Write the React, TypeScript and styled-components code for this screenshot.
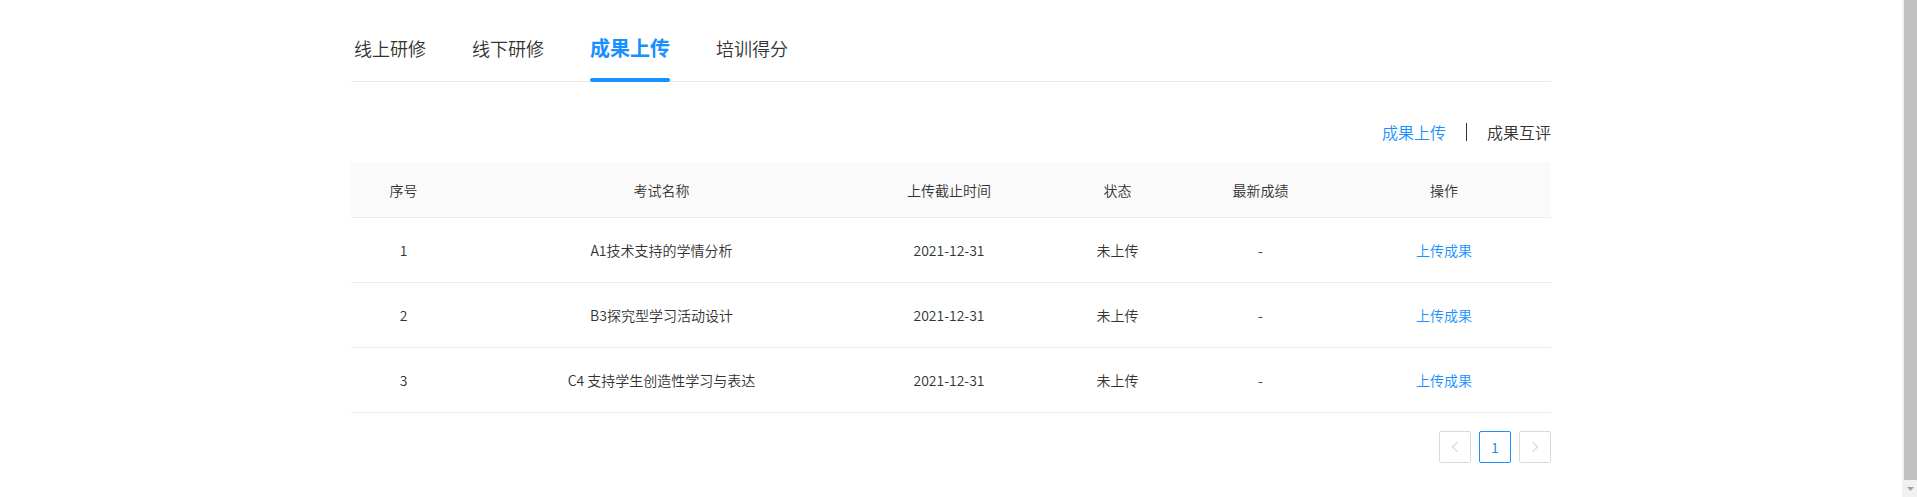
import React from 'react';
import styled, { createGlobalStyle, css } from 'styled-components';

const blue = '#1890ff';
const lineColor = '#ebebeb';
const columns = '105px 411px 164px 173px 113px 1fr';

const GlobalStyle = createGlobalStyle`
  html, body {
    margin: 0;
    padding: 0;
    height: 100%;
    overflow: hidden;
  }
  body {
    font-family: "Noto Sans CJK SC", "Noto Sans", sans-serif;
    font-weight: 350;
    color: #333;
    background: #fff;
  }
`;

const Frame = styled.div`
  display: flex;
  height: 100vh;
`;

const Main = styled.main`
  flex: 1;
  min-width: 0;
`;

const Container = styled.div`
  width: 1200px;
  margin: 0 auto;
`;

const TabBar = styled.nav`
  display: flex;
  gap: 46px;
  height: 81px;
  padding-left: 3px;
  border-bottom: 1px solid #e8e8e8;
`;

const Tab = styled.div<{ $active?: boolean }>`
  position: relative;
  padding-top: 36px;
  height: 24px;
  line-height: 24px;
  font-size: 18px;
  color: #333;
  cursor: pointer;
  ${(p) =>
    p.$active &&
    css`
      font-size: 20px;
      font-weight: bold;
      color: ${blue};
      &::after {
        content: '';
        position: absolute;
        left: 0;
        right: 0;
        bottom: -22px;
        height: 4px;
        border-radius: 2px;
        background: ${blue};
      }
    `}
`;

const SubNav = styled.div`
  display: flex;
  justify-content: flex-end;
  align-items: center;
  gap: 20px;
  padding-top: 38px;
  height: 24px;
  margin-bottom: 18px;
`;

const SubLink = styled.span<{ $active?: boolean }>`
  font-size: 16px;
  line-height: 24px;
  color: ${(p) => (p.$active ? blue : '#333')};
  cursor: pointer;
`;

const Divider = styled.i`
  width: 1px;
  height: 18px;
  background: #333;
`;

const HeadRow = styled.div`
  display: grid;
  grid-template-columns: ${columns};
  align-items: center;
  height: 55px;
  background: #fafafa;
  border-bottom: 1px solid ${lineColor};
`;

const BodyRow = styled.div`
  display: grid;
  grid-template-columns: ${columns};
  align-items: center;
  height: 64px;
  border-bottom: 1px solid ${lineColor};
`;

const Cell = styled.div<{ $offset?: number }>`
  text-align: center;
  font-size: 14px;
  line-height: 20px;
  color: #333;
  padding-left: ${(p) => p.$offset ?? 0}px;
`;

const ActionLink = styled.a`
  color: ${blue};
  text-decoration: none;
  cursor: pointer;
`;

const Pager = styled.div`
  display: flex;
  justify-content: flex-end;
  gap: 8px;
  margin-top: 18px;
`;

const PageButton = styled.button<{ $active?: boolean }>`
  display: flex;
  align-items: center;
  justify-content: center;
  width: 32px;
  height: 32px;
  padding: 0;
  border: 1px solid ${(p) => (p.$active ? blue : '#d9d9d9')};
  border-radius: 2px;
  background: #fff;
  color: ${(p) => (p.$active ? blue : '#c0c0c0')};
  font-family: inherit;
  font-weight: 400;
  font-size: 14px;
  cursor: pointer;
`;

const ScrollRail = styled.div`
  display: flex;
  flex-direction: column;
  width: 15px;
  background: #f1f1f1;
`;

const ScrollThumb = styled.div`
  flex: 1;
  margin-left: 2px;
  background: #c1c1c1;
`;

const ScrollButton = styled.div`
  display: flex;
  align-items: center;
  justify-content: center;
  height: 17px;
  padding-left: 2px;
`;

const Chevron: React.FC<{ dir: 'left' | 'right' }> = ({ dir }) => (
  <svg width="8" height="12" viewBox="0 0 8 12" fill="none">
    <polyline
      points={dir === 'left' ? '6.5,1 1.5,6 6.5,11' : '1.5,1 6.5,6 1.5,11'}
      stroke="currentColor"
      strokeWidth="1"
    />
  </svg>
);

const tabs = ['线上研修', '线下研修', '成果上传', '培训得分'];
const heads = ['序号', '考试名称', '上传截止时间', '状态', '最新成绩', '操作'];
const rows = [
  { no: 1, name: 'A1技术支持的学情分析' },
  { no: 2, name: 'B3探究型学习活动设计' },
  { no: 3, name: 'C4 支持学生创造性学习与表达' },
];

export default function App() {
  return (
    <>
      <GlobalStyle />
      <Frame>
        <Main>
          <Container>
            <TabBar>
              {tabs.map((t) => (
                <Tab key={t} $active={t === '成果上传'}>
                  {t}
                </Tab>
              ))}
            </TabBar>

            <SubNav>
              <SubLink $active>成果上传</SubLink>
              <Divider />
              <SubLink>成果互评</SubLink>
            </SubNav>

            <HeadRow>
              {heads.map((h, i) => (
                <Cell key={h} $offset={i === heads.length - 1 ? 20 : 0}>
                  {h}
                </Cell>
              ))}
            </HeadRow>
            {rows.map((r) => (
              <BodyRow key={r.no}>
                <Cell>{r.no}</Cell>
                <Cell>{r.name}</Cell>
                <Cell>2021-12-31</Cell>
                <Cell>未上传</Cell>
                <Cell>-</Cell>
                <Cell $offset={20}>
                  <ActionLink>上传成果</ActionLink>
                </Cell>
              </BodyRow>
            ))}

            <Pager>
              <PageButton>
                <Chevron dir="left" />
              </PageButton>
              <PageButton $active>1</PageButton>
              <PageButton>
                <Chevron dir="right" />
              </PageButton>
            </Pager>
          </Container>
        </Main>
        <ScrollRail>
          <ScrollThumb />
          <ScrollButton>
            <svg width="7" height="4" viewBox="0 0 7 4">
              <polygon points="0,0 7,0 3.5,4" fill="#a3a3a3" />
            </svg>
          </ScrollButton>
        </ScrollRail>
      </Frame>
    </>
  );
}
